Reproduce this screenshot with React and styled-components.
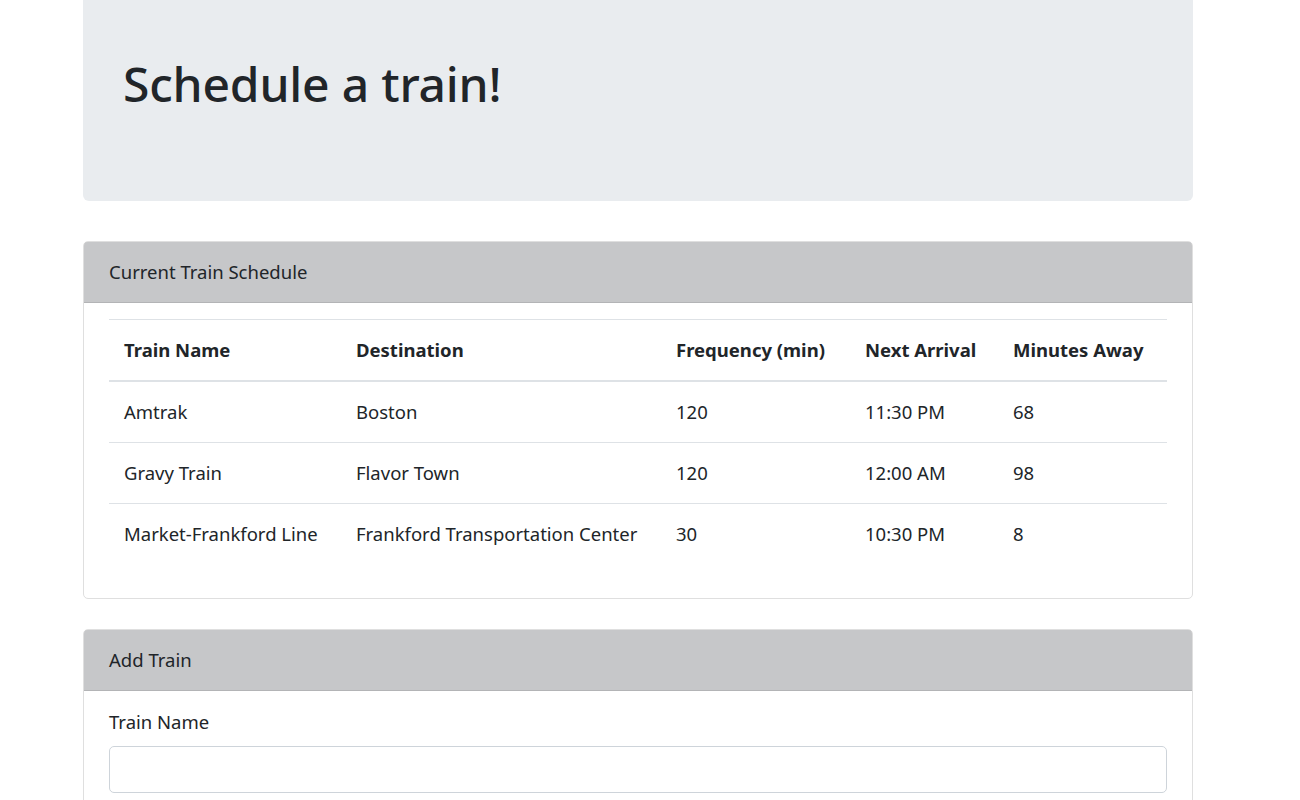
import React from "react";
import styled, { createGlobalStyle } from "styled-components";

const GlobalStyle = createGlobalStyle`
  html, body {
    margin: 0;
    padding: 0;
    background: #fff;
  }
  body {
    font-family: "Noto Sans", "Open Sans", sans-serif;
    font-size: 18.5px;
    line-height: 30px;
    color: #212529;
  }
  * { box-sizing: border-box; }
`;

const Container = styled.div`
  width: 1110px;
  margin-left: 83px;
  padding-bottom: 40px;
`;

const Jumbotron = styled.header`
  background: #e9ecef;
  height: 201px;
  padding: 53px 40px 0;
  border-radius: 0 0 6px 6px;
  margin-bottom: 40px;
`;

const Title = styled.h1`
  margin: 0;
  font-size: 48px;
  font-weight: 500;
  line-height: 62px;
  letter-spacing: -0.2px;
`;

const Card = styled.section`
  border: 1px solid #dfdfdf;
  border-radius: 5px;
  margin-bottom: 30px;
  overflow: hidden;
`;

const CardHeader = styled.div`
  background: #c6c7c9;
  border-bottom: 1px solid #b3b4b6;
  padding: 15px 25px;
  margin: -1px -1px 0;
  border-top: 1px solid #a9aaac;
  border-left: 1px solid #b8b9bb;
  border-right: 1px solid #b8b9bb;
  border-radius: 5px 5px 0 0;
  line-height: 30px;
`;

const CardBody = styled.div`
  padding: 16px 25px ${(p) => p.$bottom || 16}px;
`;

const Table = styled.table`
  width: 100%;
  border-collapse: collapse;
  table-layout: fixed;
`;

const Th = styled.th`
  text-align: left;
  font-weight: 700;
  padding: 15px;
  line-height: 30px;
  border-top: 1px solid #dee2e6;
  border-bottom: 2px solid #dee2e6;
  white-space: nowrap;
`;

const Td = styled.td`
  padding: 15px;
  line-height: 30px;
  border-bottom: 1px solid #dee2e6;
  white-space: nowrap;
`;

const Row = styled.tr`
  &:last-child td {
    border-bottom: none;
  }
`;

const Spacer = styled.div`
  height: 20px;
`;

const Field = styled.div`
  margin-bottom: 20px;
`;

const Label = styled.label`
  display: block;
  margin-bottom: 9px;
`;

const Input = styled.input`
  display: block;
  width: 100%;
  height: 47px;
  border: 1px solid #ced4da;
  border-radius: 5px;
  padding: 7px 15px;
  font: inherit;
  color: #495057;
`;

const Button = styled.button`
  font: inherit;
  color: #fff;
  background: #007bff;
  border: 1px solid #007bff;
  border-radius: 5px;
  padding: 7px 15px;
`;

const trains = [
  { name: "Amtrak", dest: "Boston", freq: 120, next: "11:30 PM", away: 68 },
  { name: "Gravy Train", dest: "Flavor Town", freq: 120, next: "12:00 AM", away: 98 },
  { name: "Market-Frankford Line", dest: "Frankford Transportation Center", freq: 30, next: "10:30 PM", away: 8 },
];

const cols = [232, 320, 189, 148, 169];

export default function App() {
  return (
    <>
      <GlobalStyle />
      <Container>
        <Jumbotron>
          <Title>Schedule a train!</Title>
        </Jumbotron>

        <Card>
          <CardHeader>Current Train Schedule</CardHeader>
          <CardBody $bottom={14}>
            <Table>
              <colgroup>
                {cols.map((w, i) => (
                  <col key={i} style={{ width: w }} />
                ))}
              </colgroup>
              <thead>
                <tr>
                  <Th>Train Name</Th>
                  <Th>Destination</Th>
                  <Th>Frequency (min)</Th>
                  <Th>Next Arrival</Th>
                  <Th>Minutes Away</Th>
                </tr>
              </thead>
              <tbody>
                {trains.map((t) => (
                  <Row key={t.name}>
                    <Td>{t.name}</Td>
                    <Td>{t.dest}</Td>
                    <Td>{t.freq}</Td>
                    <Td>{t.next}</Td>
                    <Td>{t.away}</Td>
                  </Row>
                ))}
              </tbody>
            </Table>
            <Spacer />
          </CardBody>
        </Card>

        <Card>
          <CardHeader>Add Train</CardHeader>
          <CardBody $bottom={25}>
            <Field>
              <Label>Train Name</Label>
              <Input type="text" />
            </Field>
            <Field>
              <Label>Destination</Label>
              <Input type="text" />
            </Field>
            <Field>
              <Label>First Train Time (HH:mm - military time)</Label>
              <Input type="text" />
            </Field>
            <Field>
              <Label>Frequency (min)</Label>
              <Input type="text" />
            </Field>
            <Button type="submit">Submit</Button>
          </CardBody>
        </Card>
      </Container>
    </>
  );
}
